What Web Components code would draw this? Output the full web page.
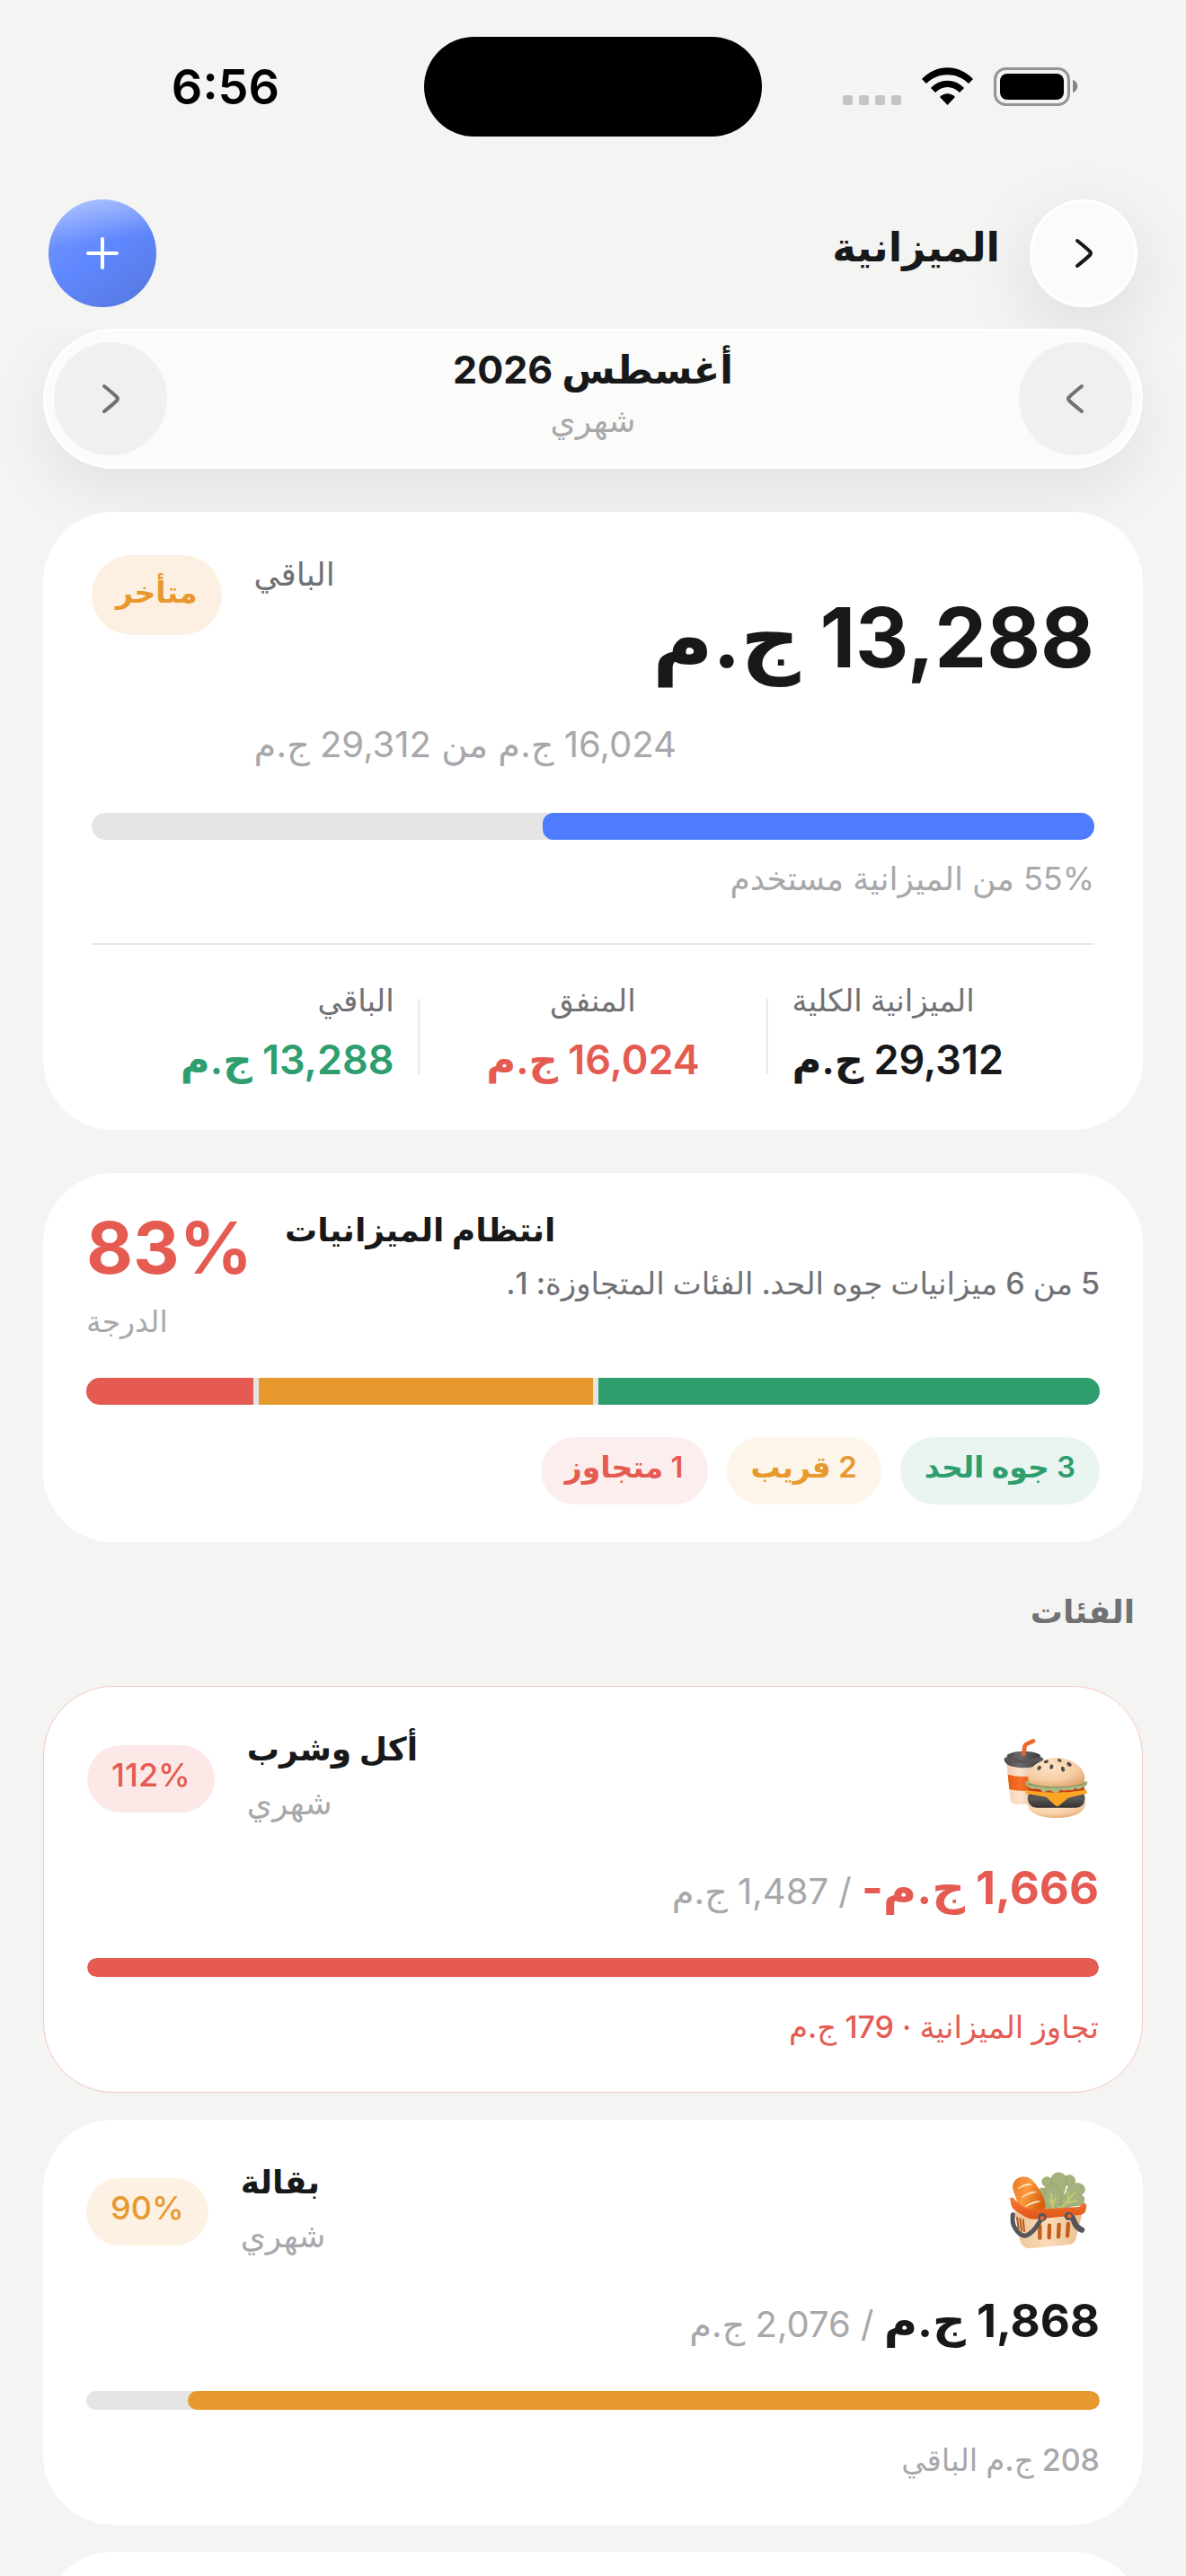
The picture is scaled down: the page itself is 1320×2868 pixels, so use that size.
<!DOCTYPE html>
<html lang="ar" dir="rtl">
<head>
<meta charset="utf-8">
<meta name="viewport" content="width=device-width, initial-scale=1">
<title>الميزانية</title>
<style>
    html, body {
        margin: 0;
        height: 100%;
    }

    body {
        --ink: #17181a;
        --gray: #707175;
        --muted: #a7a8ab;
        --track: #e5e5e3;
        --blue: #4f7cff;
        --red: #e55b52;
        --orange: #e8992e;
        --green: #2e9e6f;

        background: #f4f4f2;
        color: var(--ink);
        font-family: Inter, "DejaVu Sans", sans-serif;
        overflow: hidden;
    }
</style>
</head>
<body>
<budget-app>
    <status-bar slot="status" time="6:56"></status-bar>
    <page-header slot="header" title="الميزانية"></page-header>

    <month-switcher month="أغسطس 2026" period="شهري"></month-switcher>

    <budget-summary status="متأخر" left="13,288 ج.م" spent="16,024 ج.م" total="29,312 ج.م" percent="55"></budget-summary>

    <budget-score title="انتظام الميزانيات" score="83%" within="3" near="2" over="1">5 من 6 ميزانيات جوه الحد. الفئات المتجاوزة: 1.</budget-score>

    <section-title>الفئات</section-title>

    <category-card tone="over" name="أكل وشرب" period="شهري" percent="112" amount="1,666 ج.م-" limit="1,487 ج.م" note="تجاوز الميزانية · 179 ج.م">
        <food-icon slot="icon"></food-icon>
    </category-card>
    <category-card tone="near" name="بقالة" period="شهري" percent="90" amount="1,868 ج.م" limit="2,076 ج.م" note="208 ج.م الباقي">
        <basket-icon slot="icon"></basket-icon>
    </category-card>
    <empty-card></empty-card>
</budget-app>

<script>
// small helper so every element opens its root the same way
class BaseElement extends HTMLElement {
    constructor() {
        super();

        this.attachShadow({ mode: 'open' });
    }

    connectedCallback() {
        this.shadowRoot.innerHTML = this.template();
    }

    attr(name) {
        return this.getAttribute(name) || '';
    }
}

// budget-app
class BudgetApp extends BaseElement {
    template() {
        return `
            <style>
            :host {
                display: flex;
                flex-direction: column;
                height: 100vh;
            }

            main {
                flex: 1;
                min-height: 0;
                overflow: hidden;
                padding: 0 48px;
            }
            </style>
            <slot name="status"></slot>
            <slot name="header"></slot>
            <main><slot></slot></main>
        `;
    }
}

// status-bar
class StatusBar extends BaseElement {
    template() {
        return `
            <style>
            :host {
                display: grid;
                grid-template-columns: 1fr 376px 1fr;
                align-items: center;
                direction: ltr;
                padding: 41px 0 46px;
            }

            time {
                padding-left: 30px;
                text-align: center;
                font-size: 54px;
                font-weight: 600;
                line-height: 60px;
                color: #000;
            }

            .island {
                height: 111px;
                border-radius: 56px;
                background: #000;
            }

            .icons {
                display: flex;
                justify-content: center;
                padding-right: 30px;
            }
            </style>
            <time>${this.attr('time')}</time>
            <div class="island"></div>
            <div class="icons">
                <svg width="264" height="46" viewBox="0 0 264 46" aria-hidden="true">
                    <g fill="#c4c4c2">
                        <rect x="1" y="32" width="11" height="11" rx="3"/>
                        <rect x="19" y="32" width="11" height="11" rx="3"/>
                        <rect x="37" y="32" width="11" height="11" rx="3"/>
                        <rect x="55" y="32" width="11" height="11" rx="3"/>
                    </g>
                    <path d="M89 14C105-3 130-3 146 14L141 19C128 6 107 6 94 19Z"/>
                    <path d="M99 24C109 13 126 13 136 24L131 29C123 21 112 21 104 29Z"/>
                    <path d="M109 34C114 29 121 29 126 34L117.500 43Z"/>
                    <rect x="170.500" y="2.500" width="82" height="40" rx="12" fill="none" stroke="#949492" stroke-width="3"/>
                    <rect x="176" y="8" width="71" height="29" rx="8"/>
                    <path d="M257 15C264 17 264 27 257 29Z" fill="#848482"/>
                </svg>
            </div>
        `;
    }
}

// page-header
class PageHeader extends BaseElement {
    template() {
        return `
            <style>
            :host {
                display: flex;
                align-items: center;
                gap: 33px;
                padding: 24px 54px;
            }

            h1 {
                flex: 1;
                margin: 0;
                padding-bottom: 15px;
                font-size: 45px;
                line-height: 72px;
            }

            button {
                display: grid;
                place-items: center;
                width: 120px;
                height: 120px;
                padding: 0;
                border: 3px solid #fff;
                border-radius: 50%;
                background: #fbfbf9;
                box-shadow: 0 24px 84px rgb(0 0 0 / 0.11);
                box-sizing: border-box;
            }

            .add {
                border: 0;
                background:
                    linear-gradient(172deg, rgb(255 255 255 / 0.45), rgb(255 255 255 / 0) 40%),
                    linear-gradient(145deg, #7698ff 0%, #5f87fd 50%, #5577dc 100%);
                box-shadow: none;
            }
            </style>
            <button aria-label="رجوع">
                <svg width="48" height="48" viewBox="0 0 48 48" fill="none" stroke="#17181a" stroke-width="4" stroke-linecap="round" stroke-linejoin="round"><path d="M17 10C22 14 27 18 31 22Q33 24 31 26C27 30 22 34 17 38"/></svg>
            </button>
            <h1>${this.attr('title')}</h1>
            <button class="add" aria-label="إضافة">
                <svg width="48" height="48" viewBox="0 0 48 48" stroke="#fff" stroke-width="4" stroke-linecap="round"><path d="M24 8V40M8 24H40"/></svg>
            </button>
        `;
    }
}

// month-switcher
class MonthSwitcher extends BaseElement {
    template() {
        return `
            <style>
            :host {
                display: flex;
                align-items: center;
                justify-content: space-between;
                padding: 12px 9px;
                margin-bottom: 48px;
                border: 3px solid #fff;
                border-radius: 78px;
                background: #fbfbf9;
                box-shadow: 0 24px 72px rgb(0 0 0 / 0.08);
            }

            button {
                display: grid;
                place-items: center;
                width: 126px;
                height: 126px;
                padding: 0;
                border: 0;
                border-radius: 50%;
                background: #f0f0ee;
            }

            div {
                padding-bottom: 12px;
                text-align: center;
            }

            h2, p {
                margin: 0;
            }

            h2 {
                font-size: 43px;
                line-height: 60px;
            }

            p {
                font-size: 36px;
                line-height: 54px;
                color: var(--muted);
            }
            </style>
            <button aria-label="الشهر السابق">
                <svg width="48" height="48" viewBox="0 0 48 48" fill="none" stroke="#707175" stroke-width="4" stroke-linecap="round" stroke-linejoin="round"><path d="M31 10C26 14 21 18 17 22Q15 24 17 26C21 30 26 34 31 38"/></svg>
            </button>
            <div>
                <h2>${this.attr('month')}</h2>
                <p>${this.attr('period')}</p>
            </div>
            <button aria-label="الشهر التالي">
                <svg width="48" height="48" viewBox="0 0 48 48" fill="none" stroke="#707175" stroke-width="4" stroke-linecap="round" stroke-linejoin="round"><path d="M17 10C22 14 27 18 31 22Q33 24 31 26C27 30 22 34 17 38"/></svg>
            </button>
        `;
    }
}

// progress-bar
class ProgressBar extends BaseElement {
    template() {
        const value = Math.min(Number(this.attr('value')), 100);

        return `
            <style>
            :host {
                display: block;
                height: var(--bar-height, 21px);
                border-radius: 15px;
                background: var(--track);
                overflow: hidden;
            }

            div {
                width: ${value}%;
                height: 100%;
                border-radius: 12px;
                background: var(--bar-color);
            }
            </style>
            <div role="progressbar" aria-valuenow="${value}" aria-valuemin="0" aria-valuemax="100"></div>
        `;
    }
}

// tone-pill
class TonePill extends BaseElement {
    template() {
        return `
            <style>
            :host {
                display: block;
                padding: 9px 27px 18px;
                border-radius: 48px;
                font-size: 33px;
                font-weight: 600;
                line-height: 48px;
                white-space: nowrap;
            }

            :host([tone="late"]) {
                padding: 17px 27px 24px;
                color: var(--orange);
                background: #fdf0e2;
            }

            :host([tone="within"]) {
                color: var(--green);
                background: #eaf5f1;
            }

            :host([tone="near"]) {
                color: var(--orange);
                background: #fdf5ea;
            }

            :host([tone="over"]) {
                color: var(--red);
                background: #fdeeee;
            }
            </style>
            <slot></slot>
        `;
    }
}

// budget-summary
class BudgetSummary extends BaseElement {
    template() {
        return `
            <style>
            :host {
                display: block;
                padding: 48px 54px;
                margin-bottom: 48px;
                border-radius: 78px;
                background: #fff;
            }

            p, dl, dd {
                margin: 0;
            }

            .top {
                display: flex;
                align-items: flex-start;
                gap: 36px;
            }

            .text {
                flex: 1;
            }

            .label {
                font-size: 36px;
                font-weight: 500;
                line-height: 42px;
                text-align: end;
                color: var(--gray);
            }

            .amount {
                font-size: 92px;
                font-weight: 700;
                line-height: 100px;
            }

            .of {
                margin-top: 42px;
                font-size: 40px;
                line-height: 54px;
                text-align: end;
                color: var(--muted);
            }

            progress-bar {
                --bar-height: 30px;
                --bar-color: var(--blue);
                margin: 49px 0 19px;
            }

            .used {
                font-size: 36px;
                line-height: 48px;
                color: var(--muted);
            }

            dl {
                display: grid;
                grid-template-columns: 15fr auto 16fr auto 15fr;
                align-items: end;
                margin-top: 48px;
                padding-top: 38px;
                border-top: 2px solid #e8e8e7;
            }

            i {
                width: 2px;
                height: 84px;
                margin-bottom: 14px;
                background: #e8e8e7;
            }

            .stat {
                padding: 0 26px;
                text-align: center;
            }

            .stat:first-child {
                text-align: end;
            }

            .stat:last-child {
                text-align: start;
            }

            dt {
                font-size: 34px;
                font-weight: 500;
                line-height: 48px;
                color: var(--gray);
            }

            dd {
                margin-top: 12px;
                font-size: 45px;
                font-weight: 600;
                line-height: 60px;
                white-space: nowrap;
            }
            </style>
            <div class="top">
                <div class="text">
                    <p class="label">الباقي</p>
                    <p class="amount">${this.attr('left')}</p>
                    <p class="of">${this.attr('spent')} من ${this.attr('total')}</p>
                </div>
                <tone-pill tone="late">${this.attr('status')}</tone-pill>
            </div>
            <progress-bar value="${this.attr('percent')}"></progress-bar>
            <p class="used">${this.attr('percent')}% من الميزانية مستخدم</p>
            <dl>
                <div class="stat"><dt>الميزانية الكلية</dt><dd>${this.attr('total')}</dd></div>
                <i></i>
                <div class="stat"><dt>المنفق</dt><dd style="color: var(--red)">${this.attr('spent')}</dd></div>
                <i></i>
                <div class="stat"><dt>الباقي</dt><dd style="color: var(--green)">${this.attr('left')}</dd></div>
            </dl>
        `;
    }
}

// budget-score
class BudgetScore extends BaseElement {
    template() {
        return `
            <style>
            :host {
                display: block;
                padding: 36px 48px 42px;
                border-radius: 78px;
                background: #fff;
            }

            h2, p {
                margin: 0;
            }

            .top {
                display: flex;
                gap: 36px;
            }

            .text {
                flex: 1;
            }

            h2 {
                font-size: 36px;
                line-height: 54px;
                text-align: end;
            }

            .detail {
                font-size: 34px;
                font-weight: 500;
                line-height: 66px;
                color: var(--gray);
            }

            .score {
                text-align: end;
            }

            .score strong {
                display: block;
                font-size: 80px;
                font-weight: 700;
                line-height: 94px;
                color: var(--red);
            }

            .score span {
                display: block;
                margin-top: 11px;
                font-size: 33px;
                line-height: 48px;
                color: var(--muted);
            }

            .split {
                display: flex;
                gap: 6px;
                height: 30px;
                margin: 39px 0 36px;
                border-radius: 15px;
                background: var(--track);
                overflow: hidden;
            }

            .pills {
                display: flex;
                gap: 21px;
            }
            </style>
            <div class="top">
                <div class="text">
                    <h2>${this.attr('title')}</h2>
                    <p class="detail"><slot></slot></p>
                </div>
                <div class="score">
                    <strong>${this.attr('score')}</strong>
                    <span>الدرجة</span>
                </div>
            </div>
            <div class="split">
                <div style="flex: ${this.attr('within')}; background: var(--green)"></div>
                <div style="flex: ${this.attr('near')}; background: var(--orange)"></div>
                <div style="flex: ${this.attr('over')}; background: var(--red)"></div>
            </div>
            <div class="pills">
                <tone-pill tone="within">${this.attr('within')} جوه الحد</tone-pill>
                <tone-pill tone="near">${this.attr('near')} قريب</tone-pill>
                <tone-pill tone="over">${this.attr('over')} متجاوز</tone-pill>
            </div>
        `;
    }
}

// section-title
class SectionTitle extends BaseElement {
    template() {
        return `
            <style>
            :host {
                display: block;
                padding: 47px 9px 53px;
            }

            h2 {
                margin: 0;
                font-size: 36px;
                line-height: 60px;
                color: var(--gray);
            }
            </style>
            <h2><slot></slot></h2>
        `;
    }
}

// category-card
class CategoryCard extends BaseElement {
    template() {
        return `
            <style>
            :host {
                display: block;
                padding: 48px;
                margin-bottom: 30px;
                border-radius: 78px;
                background: #fff;
            }

            :host([tone="over"]) {
                --bar-color: var(--red);
                --note-color: var(--red);
                --amount-color: var(--red);
                border: 1px solid #f6c6c3;
            }

            :host([tone="near"]) {
                --bar-color: var(--orange);
            }

            h3, p {
                margin: 0;
            }

            .top {
                display: flex;
                align-items: center;
                gap: 36px;
                height: 108px;
            }

            .text {
                flex: 1;
                padding-bottom: 6px;
                text-align: end;
            }

            h3 {
                font-size: 36px;
                line-height: 60px;
            }

            .period {
                font-size: 36px;
                line-height: 60px;
                color: var(--muted);
            }

            tone-pill {
                font-size: 36px;
                font-weight: 500;
            }

            tone-pill[tone="over"] {
                background: #fce9e7;
            }

            tone-pill[tone="near"] {
                background: #fdf1e4;
            }

            .amounts {
                margin-top: 39px;
                font-size: 40px;
                line-height: 66px;
                color: var(--muted);
            }

            .amounts strong {
                font-size: 51px;
                line-height: 1;
                color: var(--amount-color, var(--ink));
            }

            progress-bar {
                margin: 41px 0 32px;
            }

            .note {
                font-size: 34px;
                font-weight: 500;
                line-height: 48px;
                color: var(--note-color, var(--muted));
            }
            </style>
            <div class="top">
                <slot name="icon"></slot>
                <div class="text">
                    <h3>${this.attr('name')}</h3>
                    <p class="period">${this.attr('period')}</p>
                </div>
                <tone-pill tone="${this.attr('tone')}">${this.attr('percent')}%</tone-pill>
            </div>
            <p class="amounts"><strong>${this.attr('amount')}</strong> / ${this.attr('limit')}</p>
            <progress-bar value="${this.attr('percent')}"></progress-bar>
            <p class="note">${this.attr('note')}</p>
        `;
    }
}

// empty-card
class EmptyCard extends BaseElement {
    template() {
        return `
            <style>
            :host {
                display: block;
                height: 450px;
                border-radius: 78px;
                background: #fff;
            }
            </style>
        `;
    }
}

// food-icon
class FoodIcon extends BaseElement {
    template() {
        return `
            <style>
            :host {
                display: block;
                width: 108px;
                height: 108px;
            }
            </style>
            <svg width="108" height="108" viewBox="48 45 324 324" aria-hidden="true">
                <defs>
                    <linearGradient id="cup"><stop offset="0" stop-color="#f3cfae"/><stop offset=".4" stop-color="#fbe3cc"/><stop offset="1" stop-color="#e0b48e"/></linearGradient>
                    <linearGradient id="band"><stop offset="0" stop-color="#e55a12"/><stop offset=".4" stop-color="#f9712a"/><stop offset="1" stop-color="#c9480c"/></linearGradient>
                    <linearGradient id="lid"><stop offset="0" stop-color="#4c4749"/><stop offset=".4" stop-color="#6e696a"/><stop offset="1" stop-color="#3b3739"/></linearGradient>
                    <radialGradient id="bun" cx=".4" cy=".3" r=".8"><stop offset="0" stop-color="#fde2c6"/><stop offset=".6" stop-color="#f6cda3"/><stop offset="1" stop-color="#dda06b"/></radialGradient>
                    <linearGradient id="patty" x2="0" y2="1"><stop offset="0" stop-color="#3c393a"/><stop offset=".5" stop-color="#5b5858"/><stop offset="1" stop-color="#343133"/></linearGradient>
                </defs>
                <path d="M121 130L124 102Q125 94 133 91L153 82" fill="none" stroke="#e9682a" stroke-width="14" stroke-linecap="round"/>
                <path d="M64 160L77 280Q79 292 94 293H142Q154 292 156 280L178 160Z" fill="url(#cup)"/>
                <path d="M68 194Q118 208 174 194L167 244Q118 254 73 243Z" fill="url(#band)"/>
                <path d="M56 142Q55 170 120 172Q188 170 186 142Z" fill="url(#lid)"/>
                <ellipse cx="121" cy="142" rx="65" ry="14" fill="#5b5658"/>
                <path d="M64 132Q70 118 121 116Q172 118 178 132Q166 144 121 144Q76 144 64 132Z" fill="url(#lid)"/>
                <path d="M114 131L118 108H128L127 131Z" fill="#e9682a"/>
                <path d="M133 284Q132 338 230 339Q328 338 327 284Z" fill="url(#bun)"/>
                <rect x="134" y="243" width="192" height="62" rx="31" fill="url(#patty)"/>
                <path d="M140 232H321Q330 245 318 260H145Q130 248 140 232Z" fill="#cd3b10"/>
                <path d="M129 247Q228 262 330 245L333 257L270 272L239 298Q232 303 225 296L196 269L128 258Z" fill="#f9a526"/>
                <path d="M130 216Q122 231 137 235Q145 246 158 241Q167 244 176 242Q184 258 196 250Q208 242 219 253Q234 260 244 245Q258 250 270 245Q286 250 293 239Q307 249 317 236Q335 236 334 217Z" fill="#aab882"/>
                <path d="M135 225Q228 249 329 224" fill="none" stroke="#7f9159" stroke-width="4"/>
                <path d="M137 216C126 180 169 139 230 138C292 139 334 181 323 217C315 229 277 235 230 235C183 235 145 229 137 216Z" fill="url(#bun)"/>
                <g fill="#514b49">
                    <ellipse cx="196" cy="151" rx="8" ry="5" transform="rotate(-15 196 151)"/>
                    <ellipse cx="241" cy="147" rx="7" ry="5" transform="rotate(25 241 147)"/>
                    <ellipse cx="173" cy="172" rx="6" ry="8" transform="rotate(35 173 172)"/>
                    <ellipse cx="214" cy="168" rx="6" ry="8" transform="rotate(15 214 168)"/>
                    <ellipse cx="273" cy="160" rx="9" ry="6" transform="rotate(35 273 160)"/>
                    <ellipse cx="252" cy="176" rx="6" ry="9" transform="rotate(-10 252 176)"/>
                </g>
            </svg>
        `;
    }
}

// basket-icon
class BasketIcon extends BaseElement {
    template() {
        return `
            <style>
            :host {
                display: block;
                width: 108px;
                height: 108px;
            }
            </style>
            <svg width="108" height="108" viewBox="48 49 324 324" aria-hidden="true">
                <defs>
                    <linearGradient id="bread" x2="1" y2=".4"><stop offset="0" stop-color="#e87820"/><stop offset=".5" stop-color="#fb9a41"/><stop offset="1" stop-color="#d9600f"/></linearGradient>
                    <linearGradient id="rim" x2="0" y2="1"><stop offset="0" stop-color="#f9793a"/><stop offset="1" stop-color="#dd5514"/></linearGradient>
                    <linearGradient id="body"><stop offset="0" stop-color="#edc498"/><stop offset=".5" stop-color="#fbdcb8"/><stop offset="1" stop-color="#eabd8f"/></linearGradient>
                </defs>
                <g fill="#a5b27d" stroke="#8f9f5c" stroke-width="2">
                    <ellipse cx="196" cy="112" rx="17" ry="16"/>
                    <ellipse cx="270" cy="108" rx="20" ry="18"/>
                    <ellipse cx="181" cy="153" rx="18" ry="20"/>
                    <path d="M211 110C205 74 262 72 261 110C260 130 252 140 246 190H226Q224 140 211 110Z"/>
                    <path d="M190 150C177 110 237 107 238 145C252 164 240 190 226 210H203C183 190 181 166 190 150Z"/>
                    <path d="M262 145C260 113 321 106 322 138C322 152 311 155 304 156C324 155 326 181 308 190C292 196 275 186 258 210H236Q240 175 262 145Z"/>
                </g>
                <path d="M210 152L216 206M203 170L214 184M226 163L218 184M290 147L242 202M268 151L266 171M294 177L262 181" fill="none" stroke="#cdd66a" stroke-width="4" stroke-linecap="round"/>
                <path d="M84 143C69 100 123 80 149 109C174 137 196 177 191 212H108Z" fill="url(#bread)"/>
                <path d="M99 135Q125 115 144 121Q124 123 99 135ZM112 164Q140 142 160 146Q136 151 112 164ZM123 195Q151 174 173 178Q149 183 123 195Z" fill="#fff0d0" stroke="#fff0d0" stroke-width="2"/>
                <path d="M88 212L105 306Q111 334 137 335L266 323Q289 321 293 300L314 216Z" fill="url(#body)"/>
                <path d="M96 232L101 268M106 236L111 276M116 239L120 278" stroke="#b55b20" stroke-width="6" stroke-linecap="round"/>
                <g stroke="#c45e1c" stroke-width="13" stroke-linecap="round">
                    <path d="M172 260V300M204 258L203 299M236 256L234 296M267 253L264 293"/>
                </g>
                <path d="M74 176Q69 161 84 166C96 183 122 204 145 205L304 196Q317 181 322 183Q330 187 326 204Q325 219 306 223L157 237Q139 239 121 228L88 207Q75 198 74 176Z" fill="url(#rim)"/>
                <path d="M82 222Q78 252 90 268Q104 292 122 293Q138 290 158 266L180 232" fill="none" stroke="#55565b" stroke-width="15" stroke-linecap="round" stroke-linejoin="round"/>
                <path d="M267 226Q283 229 286 244Q292 264 312 273" fill="none" stroke="#55565b" stroke-width="19" stroke-linecap="round"/>
                <circle cx="180" cy="231" r="14" fill="#55565b"/>
                <circle cx="268" cy="227" r="14" fill="#55565b"/>
                <circle cx="180" cy="234" r="7" fill="#f2682a"/>
                <circle cx="271" cy="227" r="7" fill="#f2682a"/>
            </svg>
        `;
    }
}

customElements.define('budget-app', BudgetApp);
customElements.define('status-bar', StatusBar);
customElements.define('page-header', PageHeader);
customElements.define('month-switcher', MonthSwitcher);
customElements.define('progress-bar', ProgressBar);
customElements.define('tone-pill', TonePill);
customElements.define('budget-summary', BudgetSummary);
customElements.define('budget-score', BudgetScore);
customElements.define('section-title', SectionTitle);
customElements.define('category-card', CategoryCard);
customElements.define('empty-card', EmptyCard);
customElements.define('food-icon', FoodIcon);
customElements.define('basket-icon', BasketIcon);
</script>
</body>
</html>
